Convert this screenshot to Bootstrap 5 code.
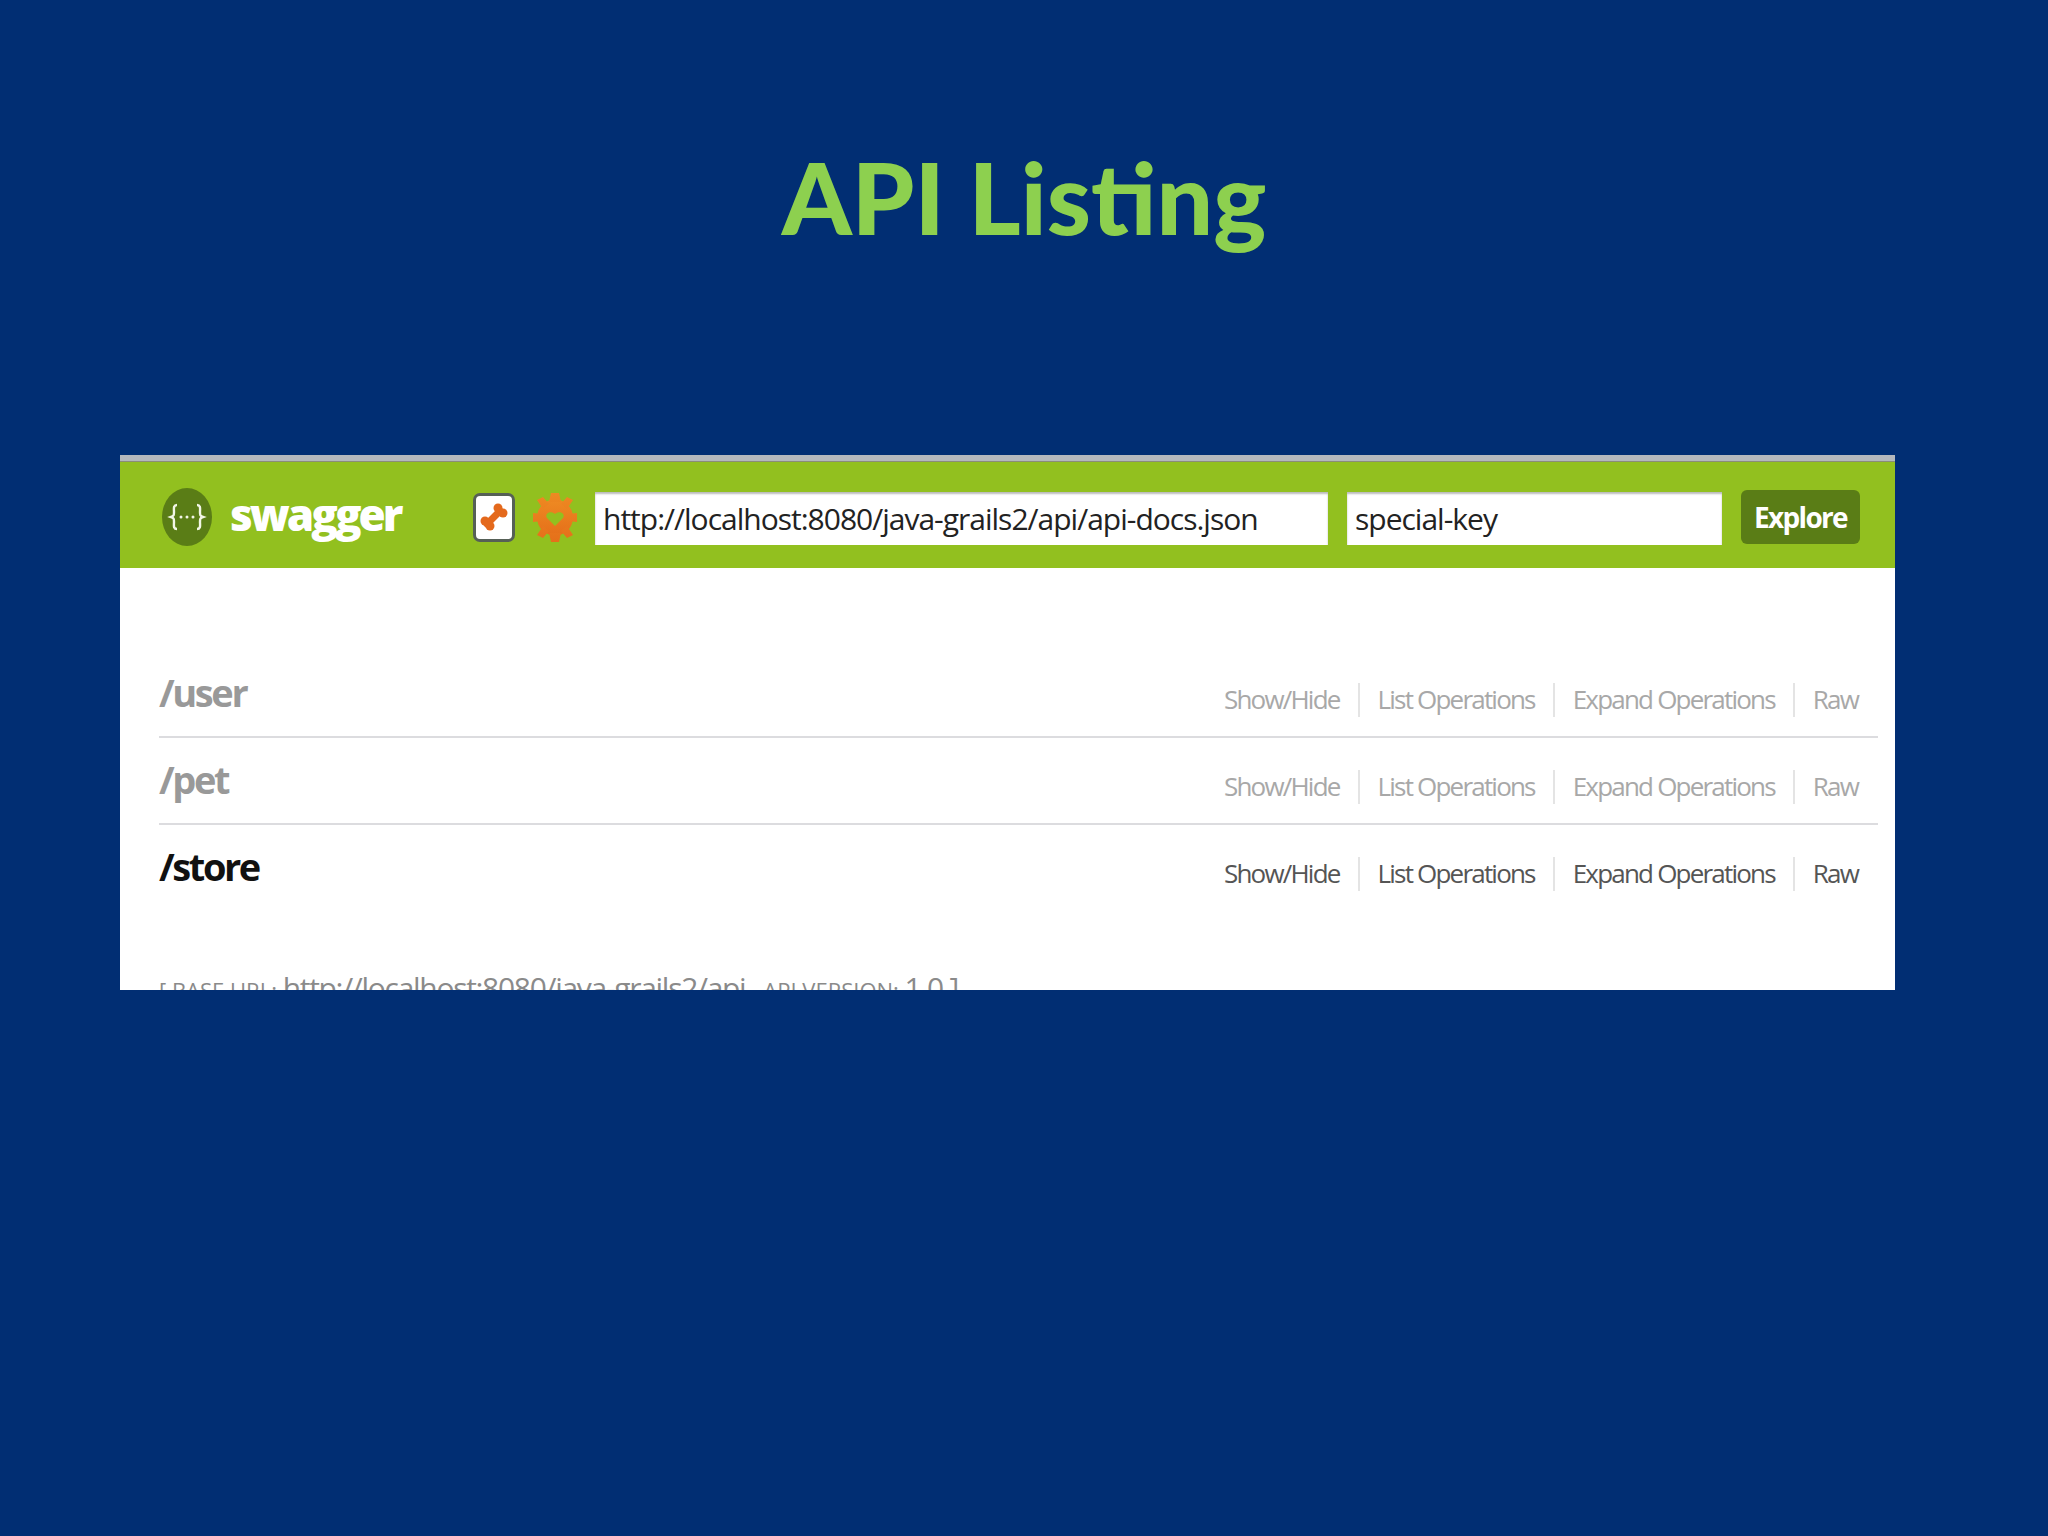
<!DOCTYPE html>
<html lang="en"><head><meta charset="utf-8"><title>API Listing</title>
<link href="https://cdn.jsdelivr.net/npm/bootstrap@5.3.0/dist/css/bootstrap.min.css" rel="stylesheet">
<style>
html,body{height:100%}
body{background:#012e73;margin:0;overflow:hidden}
.slide-title{font-family:Lato,"Liberation Sans",sans-serif;font-weight:900;font-size:100px;line-height:124px;color:#8dd04f;margin:0;padding-top:134px;height:455px;text-align:center}
.shot{width:1775px;height:535px;margin-left:120px;background:#fff;overflow:hidden}
.shot-bar{height:113px;background:#92c01f;border-top:6px solid #b4b8bd;padding:5px 34px 0 42px;box-shadow:inset 0 1px 0 #8a8d78}
.logo-ball{width:50px;height:58px;flex:none}
.logo-word{font-family:"Open Sans",sans-serif;font-weight:800;font-size:44px;line-height:58px;color:#fff;letter-spacing:-3px;width:173px;margin-left:18px;margin-top:-6px}
.bone-box{width:42px;height:49px;flex:none;margin-left:70px;background:#fff;border:3px solid #566056;border-radius:7px}
.gear-svg{width:44px;height:49px;flex:none;margin-left:18px}
.shot-input{font-family:"Open Sans",sans-serif;font-size:30px;letter-spacing:-1px;color:#222;height:53px;border:0;border-radius:0;padding:0 8px;background:#fff;box-shadow:inset 0 2px 2px #bbb;flex:none;margin-top:2px}
.shot-input:focus{box-shadow:inset 0 2px 2px #bbb}
.input-url{width:733px;margin-left:18px}
.input-key{width:375px;margin-left:19px}
.explore-btn{font-family:"Open Sans",sans-serif;font-weight:700;font-size:28px;letter-spacing:-1.7px;color:#fff;background:#5a7d16;border:0;border-radius:6px;width:119px;height:54px;padding:0;margin-left:19px;flex:none}
.res-list{margin:0 17px 0 39px;padding-top:83px}
.res-row{height:87px;border-bottom:2px solid #dcdcdf;padding-right:20px}
.res-row:last-child{border-bottom:0}
.res-name{font-family:"Open Sans",sans-serif;font-weight:700;font-size:38px;letter-spacing:-2.4px;line-height:50px;color:#999;margin:0;padding-top:16px}
.res-links{font-family:"Open Sans",sans-serif;font-size:26px;letter-spacing:-1.8px;color:#a8a8a8;margin:0;padding:32px 0 0;list-style:none}
.res-links li{height:34px;line-height:32px;padding:0 18px;border-left:2px solid #e4e4e4}
.res-links li:first-child{border-left:0}
.res-links li:last-child{padding-right:0}
.is-on .res-name{color:#111}
.is-on .res-links{color:#555}
.base-line{font-family:"Open Sans",sans-serif;color:#8a8a8a;font-size:30px;line-height:40px;margin:56px 0 0 39px;letter-spacing:-1.3px;white-space:nowrap}
.base-line small{font-size:22px;letter-spacing:0}
</style></head>
<body>
<h1 class="slide-title">API Listing</h1>
<section class="shot">
  <header class="shot-bar d-flex align-items-center">
    <svg class="logo-ball" viewBox="0 0 50 58" aria-hidden="true"><ellipse cx="25" cy="29" rx="25" ry="29" fill="#5a7d16"/><path d="M15 17c-4 0-3 4-3 7s0 4-3 5c3 1 3 2 3 5s-1 7 3 7M35 17c4 0 3 4 3 7s0 4 3 5c-3 1-3 2-3 5s1 7-3 7" fill="none" stroke="#f2f6e6" stroke-width="2.400"/><circle cx="19" cy="29" r="1.500" fill="#f2f6e6"/><circle cx="25" cy="29" r="1.500" fill="#f2f6e6"/><circle cx="31" cy="29" r="1.500" fill="#f2f6e6"/></svg>
    <div class="logo-word">swagger</div>
    <div class="bone-box d-flex align-items-center justify-content-center">
      <svg width="28" height="28" viewBox="0 0 28 28" aria-hidden="true"><path d="M7 21 20 8" stroke="#e4691c" stroke-width="7" stroke-linecap="round"/><circle cx="18" cy="5" r="4.500" fill="#e4691c"/><circle cx="23" cy="10" r="4.500" fill="#e4691c"/><circle cx="5" cy="18" r="4.500" fill="#e4691c"/><circle cx="10" cy="23" r="4.500" fill="#e4691c"/></svg>
    </div>
    <svg class="gear-svg" viewBox="0 0 44 49" aria-hidden="true"><defs><linearGradient id="gearFill" x1="0" y1="0" x2="0" y2="1"><stop offset="0" stop-color="#ee8a22"/><stop offset="1" stop-color="#e56f1a"/></linearGradient></defs><g fill="url(#gearFill)"><circle cx="22" cy="24.500" r="18"/><path d="M18 0h8l2 9h-12zM18 49h8l2-9h-12zM0 20v9l9-1v-7zM44 20v9l-9-1v-7zM4 7l6-3 6 7-6 5zM40 7l-6-3-6 7 6 5zM4 42l6 3 6-7-6-5zM40 42l-6 3-6-7 6-5z"/></g><path d="M22 33 14 25c-3-5 4-8 8-4 4-4 11-1 8 4z" fill="#92c01f"/></svg>
    <input class="form-control shot-input input-url" type="text" value="http://localhost:8080/java-grails2/api/api-docs.json" aria-label="API URL">
    <input class="form-control shot-input input-key" type="text" value="special-key" aria-label="API key">
    <button class="btn explore-btn" type="button">Explore</button>
  </header>
  <div class="res-list">
    <div class="res-row d-flex justify-content-between align-items-start">
      <h2 class="res-name">/user</h2>
      <ul class="res-links d-flex"><li>Show/Hide</li><li>List Operations</li><li>Expand Operations</li><li>Raw</li></ul>
    </div>
    <div class="res-row d-flex justify-content-between align-items-start">
      <h2 class="res-name">/pet</h2>
      <ul class="res-links d-flex"><li>Show/Hide</li><li>List Operations</li><li>Expand Operations</li><li>Raw</li></ul>
    </div>
    <div class="res-row is-on d-flex justify-content-between align-items-start">
      <h2 class="res-name">/store</h2>
      <ul class="res-links d-flex"><li>Show/Hide</li><li>List Operations</li><li>Expand Operations</li><li>Raw</li></ul>
    </div>
  </div>
  <p class="base-line"><small>[ BASE URL: </small>http://localhost:8080/java-grails2/api <small>, API VERSION: </small>1.0 ]</p>
</section>
</body></html>
